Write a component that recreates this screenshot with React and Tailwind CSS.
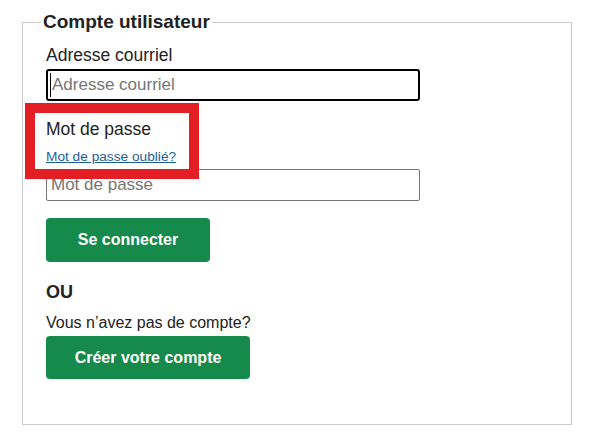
import React from 'react';

export default function App() {
  return (
    <div className="w-[592px] h-[437px] bg-white pt-[11px] px-[22px] relative" style={{ fontFamily: '"Liberation Sans", Arial, sans-serif' }}>
      <fieldset className="border border-[#cccccc] w-[550px] h-[414px] pl-[23px] pr-[23px] pt-[10px]">
        <legend className="-ml-[5px] px-[2px] text-[19px] font-bold text-[#222222] leading-[22px]">
          Compte utilisateur
        </legend>

        {/* Courriel */}
        <label className="block text-[17.5px] leading-[24px] text-[#222222]">Adresse courriel</label>
        <div className="relative mt-[2px] w-[374px]">
          <input
            type="email"
            placeholder="Adresse courriel"
            className="block w-[374px] h-[32px] border-2 border-black rounded-[3px] px-[4px] text-[17px] text-[#222222] placeholder:text-[#757575] outline-none"
          />
          {/* text caret */}
          <span className="absolute left-[4px] top-[4px] w-[1px] h-[24px] bg-black" />
        </div>

        {/* Mot de passe */}
        <label className="block mt-[16px] text-[17.5px] leading-[24px] text-[#222222]">Mot de passe</label>
        <a href="#" className="block w-fit mt-[8px] text-[13.7px] leading-[16px] text-[#1d5f9c] underline">
          Mot de passe oublié?
        </a>
        <input
          type="password"
          placeholder="Mot de passe"
          className="mt-[4px] block w-[374px] h-[32px] border border-[#767676] rounded-[2px] px-[4px] text-[17px] placeholder:text-[#757575] outline-none"
        />

        <button className="mt-[17px] block w-[164px] h-[44px] rounded-[4px] bg-[#158a4a] text-white text-[16px] font-bold">
          Se connecter
        </button>

        <div className="mt-[19px] text-[18px] font-bold leading-[22px] text-[#222222]">OU</div>
        <p className="mt-[10px] text-[16px] leading-[20px] text-[#222222]">Vous n’avez pas de compte?</p>
        <button className="mt-[3px] block w-[204px] h-[43px] rounded-[4px] bg-[#158a4a] text-white text-[16px] font-bold">
          Créer votre compte
        </button>
      </fieldset>

      {/* annotation */}
      <div className="absolute left-[25px] top-[103px] w-[174px] h-[76px] border-[10px] border-[#e31e24]" />
    </div>
  );
}
